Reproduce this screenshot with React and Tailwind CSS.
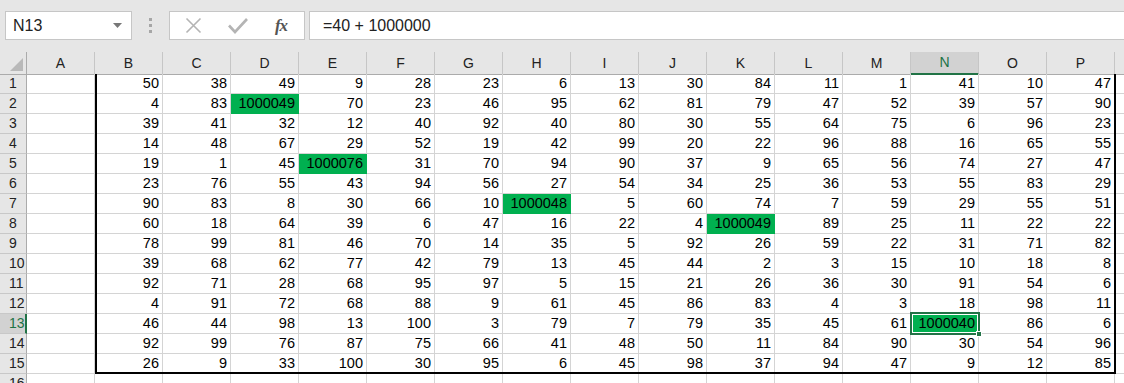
import React from "react";

const COLS = ["A","B","C","D","E","F","G","H","I","J","K","L","M","N","O","P",""];
const DATA = [
  [50,38,49,9,28,23,6,13,30,84,11,1,41,10,47],
  [4,83,1000049,70,23,46,95,62,81,79,47,52,39,57,90],
  [39,41,32,12,40,92,40,80,30,55,64,75,6,96,23],
  [14,48,67,29,52,19,42,99,20,22,96,88,16,65,55],
  [19,1,45,1000076,31,70,94,90,37,9,65,56,74,27,47],
  [23,76,55,43,94,56,27,54,34,25,36,53,55,83,29],
  [90,83,8,30,66,10,1000048,5,60,74,7,59,29,55,51],
  [60,18,64,39,6,47,16,22,4,1000049,89,25,11,22,22],
  [78,99,81,46,70,14,35,5,92,26,59,22,31,71,82],
  [39,68,62,77,42,79,13,45,44,2,3,15,10,18,8],
  [92,71,28,68,95,97,5,15,21,26,36,30,91,54,6],
  [4,91,72,68,88,9,61,45,86,83,4,3,18,98,11],
  [46,44,98,13,100,3,79,7,79,35,45,61,1000040,86,6],
  [92,99,76,87,75,66,41,48,50,11,84,90,30,54,96],
  [26,9,33,100,30,95,6,45,98,37,94,47,9,12,85],
];

function Cell({ value }) {
  const green = value !== undefined && value >= 1000000;
  return (
    <div
      className={
        "h-[20px] border-r border-b flex items-center justify-end pr-[3px] text-[14.5px] text-black " +
        (green ? "bg-[#00b050] border-[#00b050]" : "border-[#d4d4d4]")
      }
    >
      {value !== undefined ? value : ""}
    </div>
  );
}

export default function App() {
  return (
    <div
      className="w-[1124px] h-[383px] overflow-hidden bg-white relative"
      style={{ fontFamily: '"Liberation Sans", Arial, sans-serif' }}
    >
      {/* Formula bar */}
      <div className="h-[52px] bg-[#e6e6e6] flex items-start pt-[11px] pl-[5px]">
        <div className="w-[127px] h-[29px] bg-white border border-[#c6c6c6] flex items-center justify-between pl-[7px] pr-[9px]">
          <span className="text-[16px] text-[#222]">N13</span>
          <svg width="9" height="5" viewBox="0 0 9 5">
            <path d="M0 0 L9 0 L4.5 5 Z" fill="#777" />
          </svg>
        </div>
        <div className="w-[37px] h-[29px] flex flex-col items-center justify-center gap-[3px]">
          <div className="w-[3px] h-[3px] bg-[#a6a6a6]" />
          <div className="w-[3px] h-[3px] bg-[#a6a6a6]" />
          <div className="w-[3px] h-[3px] bg-[#a6a6a6]" />
        </div>
        <div className="w-[136px] h-[29px] bg-white border border-[#c6c6c6] flex items-center">
          <div className="w-[45px] flex justify-center pl-[1px]">
            <svg width="17" height="17" viewBox="0 0 17 17">
              <path d="M1.5 1.5 L15.5 15.5 M15.5 1.5 L1.5 15.5" stroke="#b4b4b4" strokeWidth="1.6" fill="none" />
            </svg>
          </div>
          <div className="w-[45px] flex justify-center">
            <svg width="20" height="17" viewBox="0 0 20 17">
              <path d="M1 8.5 L7 15 L19 2" stroke="#b4b4b4" strokeWidth="2.6" fill="none" />
            </svg>
          </div>
          <div className="flex-1 flex justify-center pr-[2px]">
            <span
              className="italic text-[17px] text-[#555] font-bold tracking-[-1px]"
              style={{ fontFamily: '"Liberation Serif", "Times New Roman", serif' }}
            >
              fx
            </span>
          </div>
        </div>
        <div className="flex-1 ml-[4px] mr-[-2px] h-[29px] bg-white border border-[#c6c6c6] flex items-center pl-[13px]">
          <span className="text-[16px] text-[#222]">=40 + 1000000</span>
        </div>
      </div>

      {/* Sheet */}
      <div className="relative">
        {/* Column headers */}
        <div className="grid grid-cols-[27px_repeat(17,68px)] h-[22px] bg-[#e6e6e6]">
          <div className="border-r border-b border-[#ababab] relative">
            <svg className="absolute right-[3px] bottom-[3px]" width="13" height="13" viewBox="0 0 13 13">
              <path d="M13 0 L13 13 L0 13 Z" fill="#b9b9b9" />
            </svg>
          </div>
          {COLS.map((c, i) =>
            c === "N" ? (
              <div
                key={i}
                className="bg-[#d2d2d2] border-r border-[#c6c6c6] border-b-2 border-b-[#217346] flex items-center justify-center text-[14px] text-[#217346]"
              >
                {c}
              </div>
            ) : (
              <div
                key={i}
                className="border-r border-[#c6c6c6] border-b border-b-[#ababab] flex items-center justify-center text-[14px] text-[#222]"
              >
                {c}
              </div>
            )
          )}
        </div>

        {/* Rows */}
        {Array.from({ length: 16 }).map((_, r) => {
          const row = DATA[r] || [];
          const selected = r === 12;
          return (
            <div key={r} className="grid grid-cols-[27px_repeat(17,68px)]">
              <div
                className={
                  "h-[20px] border-b border-b-[#c8c8c8] flex items-center pl-[9px] text-[14px] " +
                  (selected
                    ? "bg-[#d2d2d2] border-r-2 border-r-[#217346] text-[#217346]"
                    : "bg-[#e6e6e6] border-r border-r-[#ababab] text-[#222]")
                }
              >
                {r + 1}
              </div>
              <Cell value={undefined} />
              {Array.from({ length: 15 }).map((__, c) => (
                <Cell key={c} value={row[c]} />
              ))}
              <Cell value={undefined} />
            </div>
          );
        })}

        {/* Thick range border B1:P15 */}
        <div className="absolute left-[95px] top-[22px] w-[1021px] h-[300px] border-l-2 border-r-2 border-b-2 border-black pointer-events-none" />

        {/* Selection N13 */}
        <div className="absolute left-[910px] top-[260px] w-[70px] h-[23px] border-2 border-[#217346] pointer-events-none">
          <div className="absolute inset-0 border border-white" />
          <div className="absolute right-[-4px] bottom-[-4px] w-[6px] h-[6px] bg-[#217346] border border-white" />
        </div>
      </div>
    </div>
  );
}
